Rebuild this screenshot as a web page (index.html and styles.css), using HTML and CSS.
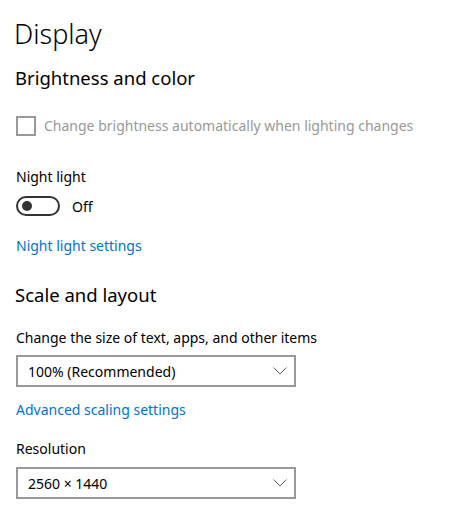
FILE: index.html
```html
<!DOCTYPE html>
<html>
<head>
<meta charset="utf-8">
<link rel="stylesheet" href="styles.css">
</head>
<body>
<main class="page">
  <h1 class="title">Display</h1>
  <h2 class="section">Brightness and color</h2>
  <label class="check disabled">
    <span class="box"></span>
    <span class="check-text">Change brightness automatically when lighting changes</span>
  </label>
  <div class="label nl-label">Night light</div>
  <div class="toggle-row">
    <span class="toggle"><span class="knob"></span></span>
    <span class="toggle-text">Off</span>
  </div>
  <a class="link nl-link" href="#">Night light settings</a>
  <h2 class="section scale">Scale and layout</h2>
  <div class="label size-label">Change the size of text, apps, and other items</div>
  <div class="select">
    <span>100% (Recommended)</span>
    <svg class="chev" width="14" height="8" viewBox="0 0 14 8"><path d="M0.5 0.5 L7 7 L13.5 0.5" fill="none" stroke="#666" stroke-width="1"/></svg>
  </div>
  <a class="link adv-link" href="#">Advanced scaling settings</a>
  <div class="label res-label">Resolution</div>
  <div class="select">
    <span>2560 × 1440</span>
    <svg class="chev" width="14" height="8" viewBox="0 0 14 8"><path d="M0.5 0.5 L7 7 L13.5 0.5" fill="none" stroke="#666" stroke-width="1"/></svg>
  </div>
</main>
</body>
</html>
```

FILE: styles.css
```css
html, body {
  margin: 0;
  padding: 0;
  background: #ffffff;
}
body {
  font-family: "Noto Sans", "Open Sans", sans-serif;
  color: #000;
  font-size: 14px;
}
.page {
  padding: 14px 0 0 16px;
  display: flex;
  flex-direction: column;
  align-items: flex-start;
}
.title {
  margin: 0;
  font-size: 27px;
  font-weight: 300;
  line-height: 40px;
  margin-left: -2px;
}
.section {
  margin: 0;
  font-size: 18.5px;
  font-weight: 400;
  line-height: 28px;
  margin-top: 10px;
  margin-left: -1px;
}
.check {
  display: flex;
  align-items: center;
  gap: 8px;
  margin-top: 24px;
  height: 20px;
}
.box {
  width: 16px;
  height: 16px;
  border: 2px solid #999;
  flex: none;
}
.check-text {
  color: #999;
  line-height: 20px;
}
.label {
  line-height: 20px;
}
.nl-label {
  margin-top: 31px;
}
.toggle-row {
  display: flex;
  align-items: center;
  gap: 12px;
  margin-top: 9px;
  height: 20px;
}
.toggle {
  box-sizing: border-box;
  width: 44px;
  height: 20px;
  border: 2px solid #333;
  border-radius: 10px;
  position: relative;
  display: block;
}
.knob {
  position: absolute;
  left: 4px;
  top: 3px;
  width: 10px;
  height: 10px;
  border-radius: 50%;
  background: #333;
}
.link {
  color: #0073cf;
  text-decoration: none;
  line-height: 20px;
}
.nl-link {
  margin-top: 20px;
}
.scale {
  margin-top: 25px;
}
.size-label {
  margin-top: 19px;
}
.select {
  box-sizing: border-box;
  width: 280px;
  height: 32px;
  border: 2px solid #999;
  display: flex;
  align-items: center;
  justify-content: space-between;
  padding: 0 7px 0 10px;
  margin-top: 7px;
}
.adv-link {
  margin-top: 13px;
}
.res-label {
  margin-top: 19px;
}
.res-label + .select {
  margin-top: 8px;
}
```
